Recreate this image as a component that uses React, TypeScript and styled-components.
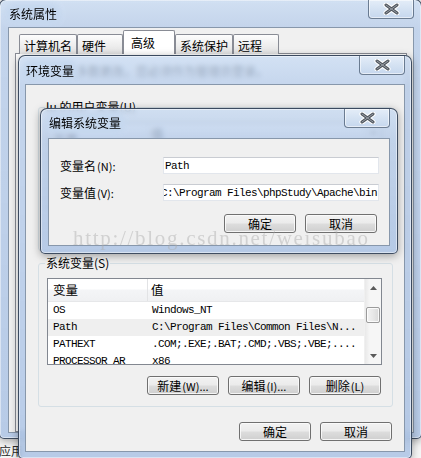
import React from "react";
import styled, { createGlobalStyle } from "styled-components";

const Global = createGlobalStyle`
  html, body { margin: 0; padding: 0; background: #f3f3f3; overflow: hidden; }
  * { box-sizing: border-box; }
`;

const UI = `"Noto Sans CJK SC", "Microsoft YaHei", sans-serif`;
const MONO = `"Liberation Mono", "Noto Sans CJK SC", monospace`;

const Stage = styled.div`
  position: relative;
  width: 421px;
  height: 458px;
  overflow: hidden;
  background: #f6f6f6;
  font-family: ${UI};
  font-size: 12px;
  color: #000;
`;

const BehindLabel = styled.div`
  position: absolute;
  left: -1px;
  top: 443px;
  font-size: 12px;
  line-height: 16px;
  color: #2a2a2a;
`;

const Frame = styled.div<{
  $x: number;
  $y: number;
  $w: number;
  $h: number;
  $pl: number;
  $pr: number;
  $pb: number;
}>`
  position: absolute;
  left: ${(p) => p.$x}px;
  top: ${(p) => p.$y}px;
  width: ${(p) => p.$w}px;
  height: ${(p) => p.$h}px;
  display: flex;
  flex-direction: column;
  padding: 0 ${(p) => p.$pr}px ${(p) => p.$pb}px ${(p) => p.$pl}px;
  border: 1px solid rgba(38, 52, 72, 0.85);
  border-radius: 7px 7px 5px 5px;
  background: linear-gradient(
    180deg,
    rgba(200, 218, 241, 0.8) 0px,
    rgba(182, 203, 232, 0.8) 30px,
    rgba(172, 195, 228, 0.85) 100%
  );
  backdrop-filter: blur(2.5px);
  box-shadow: inset 0 0 0 1px rgba(255, 255, 255, 0.45),
    0 2px 9px rgba(0, 0, 0, 0.35);
`;

const TitleBar = styled.div<{ $h: number }>`
  height: ${(p) => p.$h}px;
  flex: none;
  display: flex;
  justify-content: space-between;
  align-items: flex-start;
`;

const Title = styled.span<{ $top: number }>`
  margin-top: ${(p) => p.$top}px;
  margin-left: 1px;
  font-size: 12px;
  line-height: 14px;
  color: #000;
  background: rgb(198, 216, 239);
  box-shadow: 0 0 5px 4px rgb(198, 216, 239);
  border-radius: 6px;
`;

const CloseBtn = styled.div`
  width: 46px;
  height: 19px;
  display: flex;
  align-items: center;
  justify-content: center;
  border: 1px solid rgba(70, 88, 112, 0.75);
  border-top: none;
  border-radius: 0 0 4px 4px;
  background: linear-gradient(180deg, #e4edf8 0%, #d3e1f2 55%, #c6d7ee 100%);
  box-shadow: inset 0 0 0 1px rgba(255, 255, 255, 0.55);
`;

const Client = styled.div`
  flex: 1;
  min-height: 0;
  display: flex;
  flex-direction: column;
  background: #f0f0f0;
  border: 1px solid #8797ab;
`;

/* ---------- outer window: tabs ---------- */

const TabStrip = styled.div`
  height: 26px;
  flex: none;
  display: flex;
  align-items: flex-end;
  padding-left: 10px;
`;

const Tab = styled.div<{ $w: number; $on?: boolean }>`
  position: relative;
  z-index: ${(p) => (p.$on ? 1 : 0)};
  width: ${(p) => p.$w}px;
  height: ${(p) => (p.$on ? 24 : 20)}px;
  padding: ${(p) => (p.$on ? "3px 0 0 7px" : "2px 0 0 4px")};
  line-height: 18px;
  border: 1px solid #898c95;
  border-bottom: none;
  border-radius: 2px 2px 0 0;
  background: ${(p) =>
    p.$on ? "#ffffff" : "linear-gradient(180deg, #fdfdfd 0%, #eeeeee 55%, #e2e2e2 100%)"};
  white-space: nowrap;
`;

const TabPanel = styled.div`
  flex: 1;
  margin: -1px 6px 0 6px;
  background: #ffffff;
  border: 1px solid #898c95;
  padding: 10px 12px;
`;

const Notice = styled.div`
  line-height: 14px;
`;

/* ---------- env window ---------- */

const EnvBody = styled.div`
  flex: 1;
  display: flex;
  flex-direction: column;
  padding: 15px 11px 11px 12px;
`;

const Group = styled.fieldset<{ $gap: number }>`
  margin: ${(p) => p.$gap}px 0 0 0;
  padding: 8px 10px 11px 8px;
  border: 1px solid #d5dfe5;
  border-radius: 3px;
  min-width: 0;
`;

const Legend = styled.legend`
  margin-left: -2px;
  padding: 0 1px;
  line-height: 14px;
  font-size: 12px;
`;

const ListView = styled.div`
  height: 87px;
  display: flex;
  border: 1px solid #828790;
  background: #fff;
  overflow: hidden;
`;

const ListMain = styled.div`
  flex: 1;
  min-width: 0;
  display: flex;
  flex-direction: column;
`;

const HeaderRow = styled.div`
  height: 23px;
  flex: none;
  display: grid;
  grid-template-columns: 100px 1fr;
  background: linear-gradient(180deg, #ffffff 0%, #ffffff 45%, #f4f5f7 50%, #eff0f2 100%);
  border-bottom: 1px solid #e6e7e9;
`;

const HeaderCell = styled.div<{ $pad: number; $div?: boolean }>`
  padding-left: ${(p) => p.$pad}px;
  line-height: 22px;
  font-size: 12.5px;
  border-right: ${(p) => (p.$div ? "1px solid #e2e3e5" : "none")};
`;

const Row = styled.div<{ $sel?: boolean }>`
  height: 17px;
  flex: none;
  display: grid;
  grid-template-columns: 100px 1fr;
  background: ${(p) => (p.$sel ? "#efefef" : "transparent")};
  font-family: ${MONO};
  font-size: 11px;
  letter-spacing: -0.6px;
  line-height: 17px;
  white-space: nowrap;
`;

const Cell = styled.div<{ $pad: number }>`
  padding-left: ${(p) => p.$pad}px;
  overflow: hidden;
`;

const ScrollBar = styled.div`
  width: 17px;
  flex: none;
  display: flex;
  flex-direction: column;
  background: linear-gradient(90deg, #e9e9e9 0%, #f6f6f6 30%, #f6f6f6 100%);
  border-left: 1px solid #f0f0f0;
`;

const ArrowBox = styled.div`
  height: 17px;
  flex: none;
  display: flex;
  align-items: center;
  justify-content: center;
`;

const Track = styled.div`
  flex: 1;
  padding: 11px 1px 0 1px;
`;

const Thumb = styled.div`
  height: 16px;
  border: 1px solid #9b9b9b;
  border-radius: 2px;
  background: linear-gradient(90deg, #f3f3f3 0%, #e8e8e8 50%, #d9d9d9 100%);
  box-shadow: inset 0 0 0 1px rgba(255, 255, 255, 0.8);
`;

const ButtonRow = styled.div<{ $mt: number; $pr?: number }>`
  display: flex;
  justify-content: flex-end;
  gap: 9px;
  margin-top: ${(p) => p.$mt}px;
  padding-right: ${(p) => p.$pr ?? 0}px;
`;

const Button = styled.div`
  width: 72px;
  height: 19px;
  display: flex;
  align-items: center;
  justify-content: center;
  border: 1px solid #707070;
  border-radius: 3px;
  background: linear-gradient(180deg, #f2f2f2 0%, #ebebeb 48%, #dddddd 52%, #cfcfcf 100%);
  box-shadow: inset 0 0 0 1px rgba(252, 252, 252, 0.85);
  font-size: 12px;
  line-height: 14px;
  white-space: nowrap;
`;

const Accel = styled.span`
  font-size: 11px;
  margin-left: 1px;
`;

/* ---------- edit dialog ---------- */

const EditBody = styled.div`
  display: grid;
  grid-template-columns: 103px 216px;
  row-gap: 10px;
  align-items: center;
  padding: 18px 10px 12px 11px;
`;

const FieldLabel = styled.div`
  line-height: 14px;
  white-space: nowrap;
`;

const TextBox = styled.div`
  height: 17px;
  display: flex;
  align-items: center;
  justify-content: flex-start;
  overflow: hidden;
  padding: 0 1px 0 1px;
  background: #fff;
  border: 1px solid #e2e6ec;
  border-top-color: #c9ccd2;
  font-family: ${MONO};
  font-size: 11px;
  letter-spacing: -0.6px;
  white-space: nowrap;
`;

const TailText = styled(TextBox)`
  justify-content: flex-end;
`;

const EditButtons = styled(ButtonRow)`
  grid-column: 1 / -1;
`;

const Watermark = styled.div`
  position: absolute;
  left: 73px;
  top: 226px;
  font-family: "Liberation Serif", serif;
  font-size: 21px;
  letter-spacing: 1.7px;
  line-height: 24px;
  color: rgba(170, 170, 170, 0.45);
  pointer-events: none;
  white-space: nowrap;
`;

const CloseGlyph = () => (
  <svg width="17" height="12" viewBox="0 0 17 12">
    <path d="M3 2 L14 10 M14 2 L3 10" stroke="#ffffff" strokeWidth="5.2" strokeLinecap="round" fill="none" />
    <path d="M3 2 L14 10 M14 2 L3 10" stroke="#50565e" strokeWidth="3" strokeLinecap="round" fill="none" />
    <path d="M3 2 L14 10 M14 2 L3 10" stroke="#9aa0a8" strokeWidth="1" strokeLinecap="round" fill="none" />
  </svg>
);

const Arrow = ({ up }: { up?: boolean }) => (
  <svg width="7" height="4" viewBox="0 0 7 4">
    <polygon points={up ? "0,4 7,4 3.5,0" : "0,0 7,0 3.5,4"} fill="#5a5a5a" />
  </svg>
);

type Var = { name: string; value: string; sel?: boolean };

const VarList = ({ rows }: { rows: Var[] }) => (
  <ListView>
    <ListMain>
      <HeaderRow>
        <HeaderCell $pad={5} $div>
          变量
        </HeaderCell>
        <HeaderCell $pad={3}>值</HeaderCell>
      </HeaderRow>
      {rows.map((r) => (
        <Row key={r.name} $sel={r.sel}>
          <Cell $pad={5}>{r.name}</Cell>
          <Cell $pad={4}>{r.value}</Cell>
        </Row>
      ))}
    </ListMain>
    <ScrollBar>
      <ArrowBox>
        <Arrow up />
      </ArrowBox>
      <Track>
        <Thumb />
      </Track>
      <ArrowBox>
        <Arrow />
      </ArrowBox>
    </ScrollBar>
  </ListView>
);

const userVars: Var[] = [
  { name: "PATH", value: "C:\\Program Files\\phpStudy\\..." },
  { name: "TEMP", value: "%USERPROFILE%\\AppData\\Local\\Temp" },
  { name: "TMP", value: "%USERPROFILE%\\AppData\\Local\\Temp" },
];

const sysVars: Var[] = [
  { name: "OS", value: "Windows_NT" },
  { name: "Path", value: "C:\\Program Files\\Common Files\\N...", sel: true },
  { name: "PATHEXT", value: ".COM;.EXE;.BAT;.CMD;.VBS;.VBE;...." },
  { name: "PROCESSOR_AR", value: "x86" },
  { name: "PROCESSOR_ID", value: "x86 Family 6 Model 42" },
];

export default function App() {
  return (
    <Stage>
      <Global />
      <BehindLabel>应用</BehindLabel>

      {/* 系统属性 */}
      <Frame $x={-1} $y={-1} $w={423} $h={440} $pl={8} $pr={7} $pb={5}>
        <TitleBar $h={27}>
          <Title $top={7}>系统属性</Title>
          <CloseBtn>
            <CloseGlyph />
          </CloseBtn>
        </TitleBar>
        <Client>
          <TabStrip>
            <Tab $w={58}>计算机名</Tab>
            <Tab $w={46}>硬件</Tab>
            <Tab $w={52} $on>
              高级
            </Tab>
            <Tab $w={58}>系统保护</Tab>
            <Tab $w={46}>远程</Tab>
          </TabStrip>
          <TabPanel>
            <Notice>要进行大多数更改，您必须作为管理员登录。</Notice>
          </TabPanel>
        </Client>
      </Frame>

      {/* 环境变量 */}
      <Frame $x={18} $y={55} $w={394} $h={404} $pl={6} $pr={6} $pb={6}>
        <TitleBar $h={28}>
          <Title $top={8}>环境变量</Title>
          <CloseBtn>
            <CloseGlyph />
          </CloseBtn>
        </TitleBar>
        <Client>
          <EnvBody>
            <Group $gap={0}>
              <Legend>lu 的用户变量(U)</Legend>
              <VarList rows={userVars} />
              <ButtonRow $mt={11} $pr={1}>
                <Button>新建<Accel>(N)...</Accel></Button>
                <Button>编辑<Accel>(E)...</Accel></Button>
                <Button>删除<Accel>(D)</Accel></Button>
              </ButtonRow>
            </Group>
            <Group $gap={5}>
              <Legend>系统变量(S)</Legend>
              <VarList rows={sysVars} />
              <ButtonRow $mt={11} $pr={1}>
                <Button>新建<Accel>(W)...</Accel></Button>
                <Button>编辑<Accel>(I)...</Accel></Button>
                <Button>删除<Accel>(L)</Accel></Button>
              </ButtonRow>
            </Group>
            <ButtonRow $mt={15} $pr={1}>
              <Button>确定</Button>
              <Button>取消</Button>
            </ButtonRow>
          </EnvBody>
        </Client>
      </Frame>

      {/* 编辑系统变量 */}
      <Frame $x={40} $y={108} $w={358} $h={146} $pl={7} $pr={7} $pb={7}>
        <TitleBar $h={29}>
          <Title $top={7}>编辑系统变量</Title>
          <CloseBtn>
            <CloseGlyph />
          </CloseBtn>
        </TitleBar>
        <Client>
          <EditBody>
            <FieldLabel>
              变量名<Accel>(N):</Accel>
            </FieldLabel>
            <TextBox>Path</TextBox>
            <FieldLabel>
              变量值<Accel>(V):</Accel>
            </FieldLabel>
            <TailText>%SystemRoot%\system32;C:\Program Files\phpStudy\Apache\bin</TailText>
            <EditButtons $mt={3} $pr={2}>
              <Button>确定</Button>
              <Button>取消</Button>
            </EditButtons>
          </EditBody>
        </Client>
      </Frame>

      <Watermark>http://blog.csdn.net/weisubao</Watermark>
    </Stage>
  );
}
